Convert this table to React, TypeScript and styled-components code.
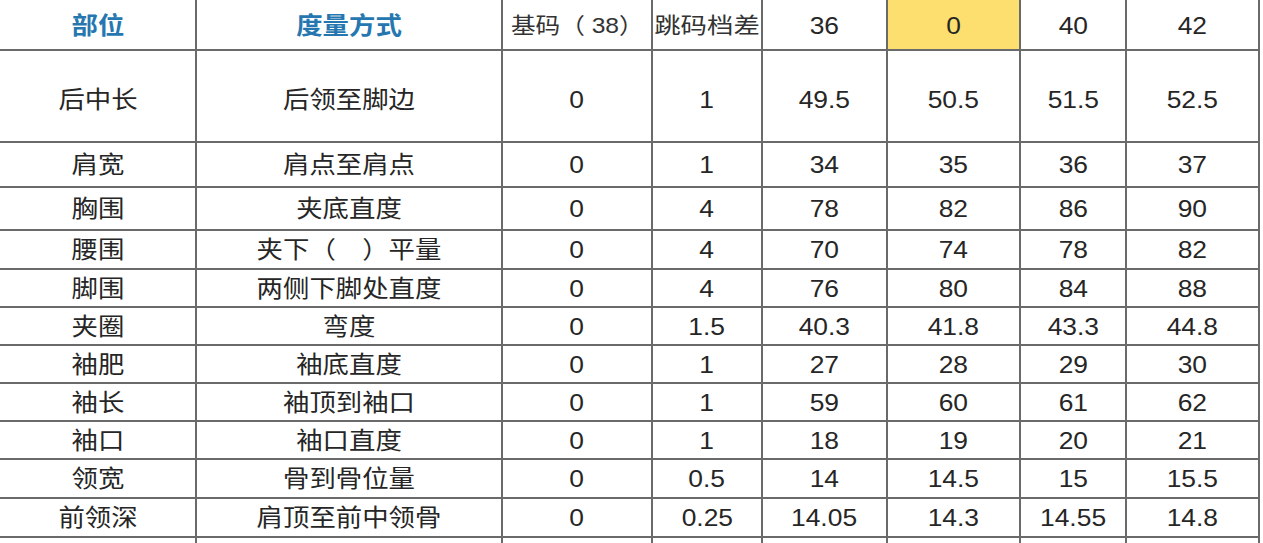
import styled, { createGlobalStyle } from "styled-components";

const GlobalStyle = createGlobalStyle`
  html, body {
    margin: 0;
    padding: 0;
    background: #ffffff;
    overflow: hidden;
  }
`

// column widths and row heights read off the sheet
const colWidths = [195, 304, 148, 108, 123, 131, 104, 131]
const rowHeights = [49, 90, 43, 41, 37, 36, 36, 36, 36, 36, 37, 37, 40]

const Sheet = styled.div`
  display: grid;
  grid-template-columns: ${colWidths.map((w) => `${w}px`).join(" ")};
  grid-template-rows: ${rowHeights.map((h) => `${h}px`).join(" ")};
  gap: 2px;
  padding-right: 2px;
  width: fit-content;
  background: #6a6a6a;
  font-family: "Liberation Sans", "Noto Sans CJK SC", sans-serif;
`

const Cell = styled.div<{ $hl?: boolean; $drop?: number }>`
  display: flex;
  align-items: center;
  justify-content: center;
  padding-top: ${(p) => p.$drop ?? 0}px;
  background: ${(p) => (p.$hl ? "#fcdf6e" : "#ffffff")};
  overflow: hidden;
  white-space: nowrap;
`

const Text = styled.span<{ $kind?: "title" | "label" | "plain"; $stretch?: number }>`
  display: inline-block;
  transform: scaleX(${(p) => p.$stretch ?? 1.1});
  font-size: ${(p) => (p.$kind === "label" ? "22px" : "24px")};
  font-weight: ${(p) => (p.$kind === "title" ? 700 : 400)};
  color: ${(p) =>
    p.$kind === "title" ? "#2677b0" : p.$kind === "label" ? "#333333" : "#262626"};
  line-height: 1;
`

const rows = [
  ["后中长", "后领至脚边", "0", "1", "49.5", "50.5", "51.5", "52.5"],
  ["肩宽", "肩点至肩点", "0", "1", "34", "35", "36", "37"],
  ["胸围", "夹底直度", "0", "4", "78", "82", "86", "90"],
  ["腰围", "夹下（　）平量", "0", "4", "70", "74", "78", "82"],
  ["脚围", "两侧下脚处直度", "0", "4", "76", "80", "84", "88"],
  ["夹圈", "弯度", "0", "1.5", "40.3", "41.8", "43.3", "44.8"],
  ["袖肥", "袖底直度", "0", "1", "27", "28", "29", "30"],
  ["袖长", "袖顶到袖口", "0", "1", "59", "60", "61", "62"],
  ["袖口", "袖口直度", "0", "1", "18", "19", "20", "21"],
  ["领宽", "骨到骨位量", "0", "0.5", "14", "14.5", "15", "15.5"],
  ["前领深", "肩顶至前中领骨", "0", "0.25", "14.05", "14.3", "14.55", "14.8"],
  ["", "", "", "", "", "", "", ""],
]

const App = () => {
  return (
    <>
      <GlobalStyle />
      <Sheet>
        <Cell $drop={2}><Text $kind="title">部位</Text></Cell>
        <Cell $drop={2}><Text $kind="title">度量方式</Text></Cell>
        <Cell $drop={2}><Text $kind="label" $stretch={1.12}>基码（ 38）</Text></Cell>
        <Cell $drop={2}><Text $kind="label" $stretch={1.2}>跳码档差</Text></Cell>
        <Cell $drop={2}><Text>36</Text></Cell>
        <Cell $drop={2} $hl><Text>0</Text></Cell>
        <Cell $drop={2}><Text>40</Text></Cell>
        <Cell $drop={2}><Text>42</Text></Cell>

        {rows.map((row, i) =>
          row.map((v, j) => (
            <Cell key={`${i}-${j}`} $drop={i === 0 ? 8 : 1}>
              <Text>{v}</Text>
            </Cell>
          ))
        )}
      </Sheet>
    </>
  )
}

export default App
